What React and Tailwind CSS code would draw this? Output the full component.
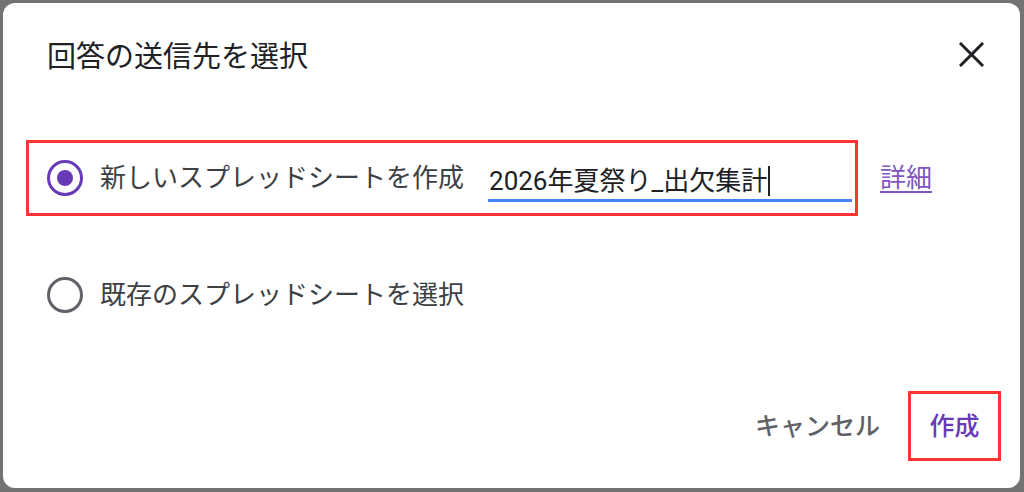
export default function App() {
  const font = { fontFamily: 'Roboto, "Noto Sans CJK JP", sans-serif' };
  return (
    <div className="w-[1024px] h-[492px] bg-[#737373] pt-[3px] pl-[3px] pr-[4px] pb-[4px]" style={font}>
      <div className="w-full h-full bg-white rounded-[12px] flex flex-col">
        <div className="h-[108px] flex items-center justify-between pl-[44px] pr-[36px]">
          <div className="text-[29px] leading-none text-[#202124]">回答の送信先を選択</div>
          <svg width="25" height="25" viewBox="0 0 25 25" className="mb-[6px]">
            <path d="M2 2 L23 23 M23 2 L2 23" stroke="#202124" strokeWidth="3" strokeLinecap="square" fill="none" />
          </svg>
        </div>

        <div className="mt-[29px] flex items-center pl-[23px]">
          <div className="w-[832px] h-[76px] border-[3px] border-[#ff3434] flex items-center pl-[18px]">
            <div className="w-[36px] h-[36px] rounded-full border-[3px] border-[#673ab7] flex items-center justify-center">
              <div className="w-[16px] h-[16px] rounded-full bg-[#673ab7]" />
            </div>
            <div className="ml-[17px] text-[26px] leading-none text-[#3c4043]">新しいスプレッドシートを作成</div>
            <div className="ml-[24px] w-[364px] h-[43px] pt-[4px] flex items-center border-b-[3px] border-[#4285f4] mt-[5px]">
              <span className="pl-[1px] text-[26px] leading-none text-[#202124]">2026年夏祭り_出欠集計</span>
              <span className="ml-[1px] w-[2px] h-[30px] bg-[#202124]" />
            </div>
          </div>
          <a className="ml-[22px] text-[26px] leading-none text-[#7e57c2] underline underline-offset-[4px] decoration-[2px]">詳細</a>
        </div>

        <div className="mt-[54px] h-[50px] flex items-center pl-[44px]">
          <div className="w-[36px] h-[36px] rounded-full border-[3px] border-[#5f6368]" />
          <div className="ml-[17px] text-[26px] leading-none text-[#3c4043]">既存のスプレッドシートを選択</div>
        </div>

        <div className="mt-[71px] flex items-center justify-end pr-[19px]">
          <div className="text-[25px] leading-none font-medium text-[#5f6368]">キャンセル</div>
          <div className="ml-[28px] w-[93px] h-[70px] border-[3px] border-[#ff3434] flex items-center justify-center">
            <span className="text-[25px] leading-none font-medium text-[#673ab7]">作成</span>
          </div>
        </div>
      </div>
    </div>
  );
}
